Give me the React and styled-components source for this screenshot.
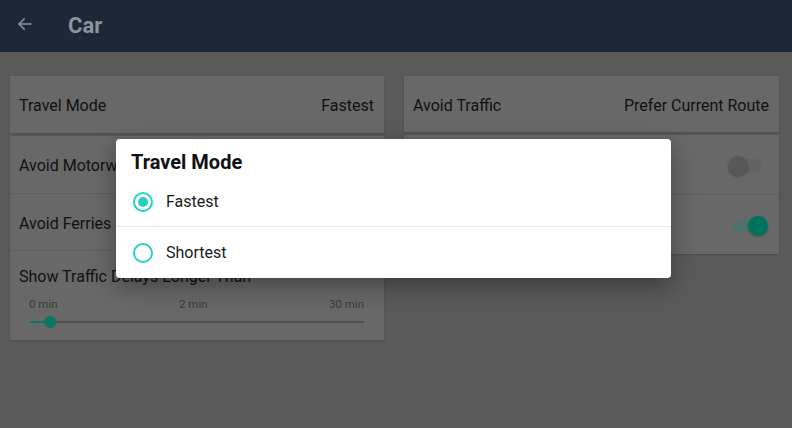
import React, { useState } from 'react';
import styled, { createGlobalStyle } from 'styled-components';

const GlobalStyle = createGlobalStyle`
  html, body {
    margin: 0;
    padding: 0;
    background: #5a5a5a;
    font-family: Roboto, "Noto Sans", sans-serif;
  }
`;

const Screen = styled.div`
  position: relative;
  height: 100vh;
  display: flex;
  flex-direction: column;
  background: #5a5a5a;
`;

const Header = styled.header`
  height: 52px;
  flex: none;
  display: flex;
  align-items: center;
  background: #1c2838;
  padding-left: 16px;
  gap: 34px;
`;

const BackIcon = styled.svg`
  width: 18px;
  height: 18px;
  margin-top: -4px;
`;

const Title = styled.h1`
  margin: 0 0 2px;
  font-size: 22px;
  font-weight: 700;
  color: #8b949c;
`;

const Content = styled.main`
  display: grid;
  grid-template-columns: 374px 375px;
  column-gap: 20px;
  padding: 24px 13px 0 10px;
  align-items: start;
`;

const Column = styled.div`
  display: flex;
  flex-direction: column;
  gap: 3px;
`;

const Card = styled.section`
  background: #686868;
  box-shadow: 0 1px 2px rgba(0, 0, 0, 0.18);
`;

const Row = styled.div`
  height: ${p => p.h || 57}px;
  display: flex;
  align-items: center;
  justify-content: space-between;
  padding: 2px 10px 0 9px;
  box-sizing: border-box;
  font-size: 16px;
  color: #111;
  & + & {
    border-top: 1px solid #5e5e5e;
  }
`;

const Value = styled.span`
  color: #111;
`;

const Toggle = styled.div`
  position: relative;
  width: 30px;
  height: 14px;
  border-radius: 7px;
  margin-right: 7px;
  background: ${p => (p.on ? '#51706a' : '#626262')};
`;

const Knob = styled.span`
  position: absolute;
  top: -3px;
  left: ${p => (p.on ? '16px' : '-4px')};
  width: 20px;
  height: 20px;
  border-radius: 50%;
  background: ${p => (p.on ? '#00735d' : '#585858')};
  box-shadow: 0 1px 2px rgba(0, 0, 0, 0.25);
`;

const SliderBlock = styled.div`
  padding: 16px 20px 17px 9px;
  border-top: 1px solid #5f5f5f;
`;

const SliderTitle = styled.div`
  font-size: 16px;
  color: #111;
  line-height: 20px;
`;

const SliderLabels = styled.div`
  display: flex;
  justify-content: space-between;
  margin: 10px 0 0 10px;
  font-size: 11.5px;
  color: #3a3a3a;
`;

const Track = styled.div`
  position: relative;
  height: 2px;
  margin: 10px 0 0 11px;
  background: #4f4f4f;
`;

const Fill = styled.div`
  height: 100%;
  background: #0b7662;
`;

const Thumb = styled.span`
  position: absolute;
  top: -5px;
  width: 12px;
  height: 12px;
  margin-left: -6px;
  border-radius: 50%;
  background: #0b7662;
`;

const Dialog = styled.div`
  position: absolute;
  left: 116px;
  top: 139px;
  width: 555px;
  background: #ffffff;
  border-radius: 4px;
  box-shadow: 0 8px 24px rgba(0, 0, 0, 0.35);
  overflow: hidden;
`;

const DialogTitle = styled.h2`
  margin: 0;
  padding: 12px 15px 3px;
  font-size: 20px;
  line-height: 23px;
  font-weight: 700;
  color: #111;
`;

const Option = styled.label`
  display: flex;
  align-items: center;
  gap: 13px;
  height: ${p => p.h}px;
  padding-left: 17px;
  font-size: 16px;
  color: #1a1a1a;
  cursor: pointer;
  & + & {
    border-top: 1px solid #e6e6e6;
  }
`;

const Radio = styled.span`
  width: 20px;
  height: 20px;
  box-sizing: border-box;
  border: 2px solid #22d1c0;
  border-radius: 50%;
  display: flex;
  align-items: center;
  justify-content: center;
  &::after {
    content: '';
    width: 10px;
    height: 10px;
    border-radius: 50%;
    background: ${p => (p.checked ? '#22d1c0' : 'transparent')};
  }
`;

const App = () => {
  const [mode, setMode] = useState('Fastest');
  const options = [
    { label: 'Fastest', h: 49 },
    { label: 'Shortest', h: 51 },
  ];
  const delay = 6;

  return (
    <>
      <GlobalStyle />
      <Screen>
        <Header>
          <BackIcon viewBox="0 0 24 24" fill="none" stroke="#8b949c" strokeWidth="2" strokeLinecap="round" strokeLinejoin="round">
            <path d="M20 12H4" />
            <path d="M11 5l-7 7 7 7" />
          </BackIcon>
          <Title>Car</Title>
        </Header>
        <Content>
          <Column>
            <Card>
              <Row>
                <span>Travel Mode</span>
                <Value>{mode}</Value>
              </Row>
            </Card>
            <Card>
              <Row>
                <span>Avoid Motorways</span>
              </Row>
              <Row>
                <span>Avoid Ferries</span>
              </Row>
              <SliderBlock>
                <SliderTitle>Show Traffic Delays Longer Than</SliderTitle>
                <SliderLabels>
                  <span>0 min</span>
                  <span>2 min</span>
                  <span>30 min</span>
                </SliderLabels>
                <Track>
                  <Fill style={{ width: `${delay}%` }} />
                  <Thumb style={{ left: `${delay}%` }} />
                </Track>
              </SliderBlock>
            </Card>
          </Column>
          <Column>
            <Card>
              <Row h={56}>
                <span>Avoid Traffic</span>
                <Value>Prefer Current Route</Value>
              </Row>
            </Card>
            <Card>
              <Row h={59}>
                <span />
                <Toggle><Knob /></Toggle>
              </Row>
              <Row h={60}>
                <span />
                <Toggle on><Knob on /></Toggle>
              </Row>
            </Card>
          </Column>
        </Content>
        <Dialog>
          <DialogTitle>Travel Mode</DialogTitle>
          {options.map(o => (
            <Option key={o.label} h={o.h} onClick={() => setMode(o.label)}>
              <Radio checked={mode === o.label} />
              {o.label}
            </Option>
          ))}
        </Dialog>
      </Screen>
    </>
  );
};

export default App;
